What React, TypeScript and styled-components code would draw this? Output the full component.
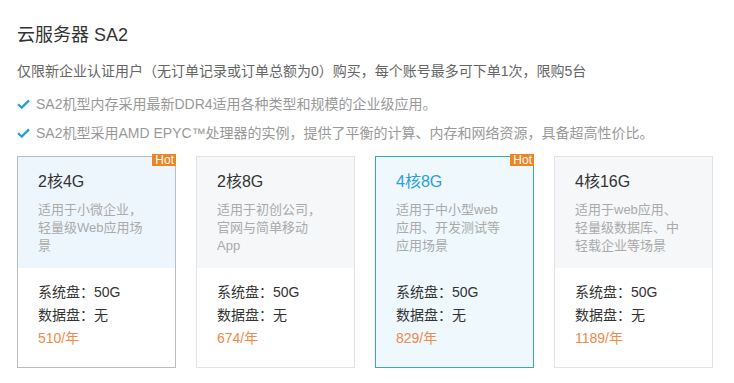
import React from 'react'
import styled, { createGlobalStyle } from 'styled-components'

const GlobalStyle = createGlobalStyle`
  body {
    margin: 0;
    background: #ffffff;
    font-family: 'Liberation Sans', 'Noto Sans CJK SC', sans-serif;
  }
`

const Page = styled.div`
  padding: 23px 0 0 17px;
  width: 734px;
  height: 383px;
  box-sizing: border-box;
  overflow: hidden;
`

const Title = styled.h1`
  margin: 0;
  font-size: 18px;
  font-weight: normal;
  line-height: 24px;
  color: #333333;
`

const Notice = styled.p`
  margin: 12px 0 0;
  font-size: 14px;
  line-height: 24px;
  color: #666666;
`

const FeatureList = styled.ul`
  list-style: none;
  padding: 0;
  margin: 9px 0 0;
  display: flex;
  flex-direction: column;
  gap: 5px;
`

const Feature = styled.li`
  display: flex;
  align-items: center;
  gap: 6px;
  font-size: 14px;
  line-height: 24px;
  color: #999999;
`

const Check = styled.svg`
  width: 13px;
  height: 10px;
  flex-shrink: 0;
`

const Cards = styled.div`
  display: grid;
  grid-template-columns: repeat(4, 159px);
  column-gap: 20px;
  margin-top: 11px;
`

const Card = styled.div<{ $active?: boolean; $hot?: boolean }>`
  position: relative;
  height: 212px;
  box-sizing: border-box;
  border: 1px solid ${({ $active, $hot }) => ($active ? '#37a8c6' : $hot ? '#b9bdc2' : '#e1e3e6')};
  background: ${({ $active }) => ($active ? '#eef8fd' : '#ffffff')};
  display: flex;
  flex-direction: column;
`

const Head = styled.div<{ $tint: string }>`
  height: 111px;
  box-sizing: border-box;
  padding: 14px 25px 0 20px;
  background: ${({ $tint }) => $tint};
`

const CardTitle = styled.div<{ $active?: boolean }>`
  font-size: 16px;
  line-height: 22px;
  color: ${({ $active }) => ($active ? '#2a9fd8' : '#333333')};
`

const Desc = styled.div`
  margin-top: 8px;
  font-size: 13px;
  line-height: 18px;
  color: #aaaaaa;
`

const Body = styled.div`
  padding: 13px 20px 0;
`

const Spec = styled.div`
  font-size: 14px;
  line-height: 23px;
  color: #333333;
`

const Price = styled.div`
  font-size: 14px;
  line-height: 23px;
  color: #ee8a4c;
`

const Hot = styled.span`
  position: absolute;
  top: -3px;
  right: -1px;
  background: #ee8523;
  color: #ffffff;
  font-size: 12px;
  line-height: 12px;
  padding: 0 2px 0 3px;
`

const CheckIcon = () => (
  <Check viewBox="0 0 13 10">
    <path d="M1 5.2 L4.8 8.6 L12 1.4" fill="none" stroke="#1e9fd6" strokeWidth="2.2" />
  </Check>
)

type Plan = {
  name: string
  desc: string
  price: string
  hot?: boolean
  active?: boolean
  tint: string
}

const plans: Plan[] = [
  { name: '2核4G', desc: '适用于小微企业，轻量级Web应用场景', price: '510/年', hot: true, tint: '#eef6fd' },
  { name: '2核8G', desc: '适用于初创公司，官网与简单移动App', price: '674/年', tint: '#f5f7f9' },
  { name: '4核8G', desc: '适用于中小型web应用、开发测试等应用场景', price: '829/年', hot: true, active: true, tint: 'transparent' },
  { name: '4核16G', desc: '适用于web应用、轻量级数据库、中轻载企业等场景', price: '1189/年', tint: '#f5f7f9' },
]

const App: React.FC = () => {
  return (
    <>
      <GlobalStyle />
      <Page>
        <Title>云服务器 SA2</Title>
        <Notice>仅限新企业认证用户（无订单记录或订单总额为0）购买，每个账号最多可下单1次，限购5台</Notice>
        <FeatureList>
          <Feature>
            <CheckIcon />
            SA2机型内存采用最新DDR4适用各种类型和规模的企业级应用。
          </Feature>
          <Feature>
            <CheckIcon />
            SA2机型采用AMD EPYC™处理器的实例，提供了平衡的计算、内存和网络资源，具备超高性价比。
          </Feature>
        </FeatureList>
        <Cards>
          {plans.map((p) => (
            <Card key={p.name} $active={p.active} $hot={p.hot}>
              {p.hot && <Hot>Hot</Hot>}
              <Head $tint={p.tint}>
                <CardTitle $active={p.active}>{p.name}</CardTitle>
                <Desc>{p.desc}</Desc>
              </Head>
              <Body>
                <Spec>系统盘：50G</Spec>
                <Spec>数据盘：无</Spec>
                <Price>{p.price}</Price>
              </Body>
            </Card>
          ))}
        </Cards>
      </Page>
    </>
  )
}

export default App
